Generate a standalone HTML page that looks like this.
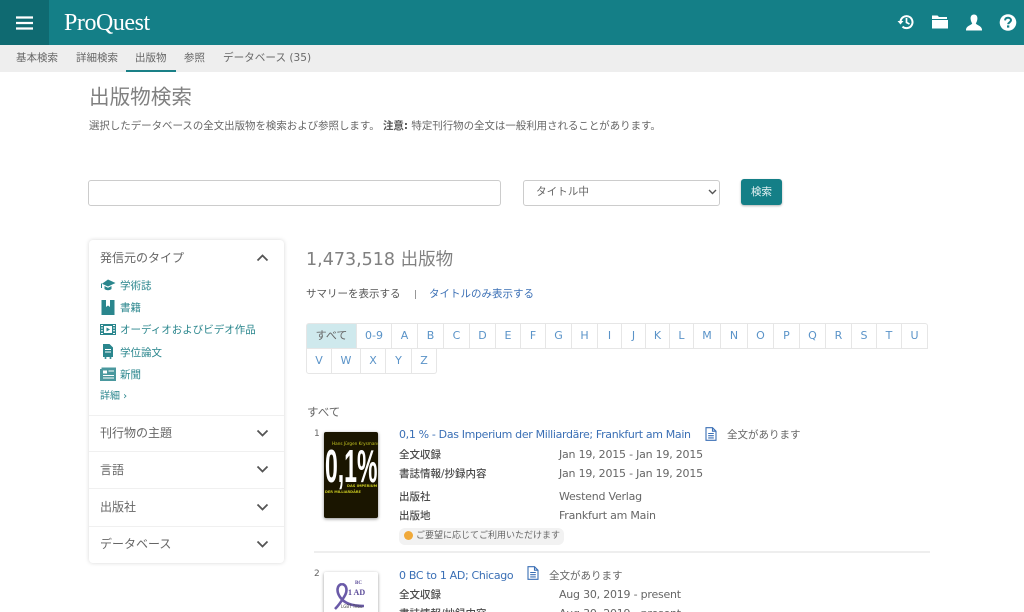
<!DOCTYPE html>
<html lang="ja"><head><meta charset="utf-8"><title>ProQuest 出版物検索</title>
<style>
html,body{margin:0;padding:0;background:#fff;width:1024px;height:612px;overflow:hidden}
#w{position:relative;width:1024px;height:612px;overflow:hidden;font-family:"DejaVu Sans","Noto Sans CJK JP",sans-serif;font-size:11px;color:#555}
.a{position:absolute;white-space:nowrap;line-height:16px}
.m{letter-spacing:-.22px;color:#666}
.t{color:#2a868d;font-size:10.5px}.l{color:#3a6fb5;letter-spacing:-.34px}.b{color:#4a4a4a;font-weight:500}
.cell{position:absolute;box-sizing:border-box;height:26px;border:1px solid #e6e6e6;border-left:0;text-align:center;line-height:24px;color:#5a93c8;font-size:11px;background:#fff}
.sec{position:absolute;left:100px;font-size:12px;color:#666;line-height:16px;white-space:nowrap}
.div{position:absolute;left:89px;width:195px;height:1px;background:#f0f0f0}
svg{position:absolute;display:block}
</style></head><body><div id="w">
<div style="position:absolute;left:0;top:0;width:1024px;height:45px;background:#147f87"></div>
<div style="position:absolute;left:0;top:0;width:49px;height:45px;background:#0f6a71"></div>
<svg style="left:16px;top:16px" width="18" height="14" viewBox="0 0 18 14"><path d="M0 1.5H17M0 7H17M0 12.5H17" stroke="#fff" stroke-width="2.2"/></svg>
<div class="a" style="left:64px;top:10px;font:24px/26px 'Liberation Serif',serif;color:#fff;letter-spacing:-.45px">ProQuest</div>
<svg style="left:897px;top:13px" width="18" height="18" viewBox="0 0 18 18"><path d="M3.5 9a6 6 0 1 1 2 4.6" fill="none" stroke="#fff" stroke-width="2"/><path d="M0.5 8H6.5L3.5 11.5Z" fill="#fff"/><path d="M9.5 5V9.5L12.5 11" fill="none" stroke="#fff" stroke-width="1.7"/></svg>
<svg style="left:931px;top:14px" width="18" height="16" viewBox="0 0 18 16"><path d="M1 1.5H6.5L8 3H16V5H1ZM1 6H17V14.5H1Z" fill="#fff"/></svg>
<svg style="left:965px;top:14px" width="18" height="17" viewBox="0 0 18 17"><path d="M9 0.5C11.6 0.5 12.6 2.6 12.4 5C12.2 7 11.4 8.5 10.8 9.4C11.2 11 16.5 11.6 17 15.5V16.5H1V15.5C1.5 11.6 6.8 11 7.2 9.4C6.6 8.5 5.8 7 5.6 5C5.4 2.6 6.4 0.5 9 0.5Z" fill="#fff"/></svg>
<svg style="left:999px;top:14px" width="18" height="17" viewBox="0 0 18 17"><circle cx="9" cy="8.5" r="8.3" fill="#fff"/><path d="M6 6.4C6.2 4.6 7.5 3.8 9 3.8C10.7 3.8 12 4.8 12 6.3C12 8.2 9.3 8.3 9.2 10.2" fill="none" stroke="#147f87" stroke-width="2"/><rect x="8" y="11.4" width="2.3" height="2.2" fill="#147f87"/></svg>

<div style="position:absolute;left:0;top:45px;width:1024px;height:27px;background:#eee"></div>
<div class="a" style="left:16px;top:50px;font-size:10.5px;color:#666">基本検索</div>
<div class="a" style="left:76px;top:50px;font-size:10.5px;color:#666">詳細検索</div>
<div class="a" style="left:135px;top:50px;font-size:10.5px;color:#666">出版物</div>
<div class="a" style="left:184px;top:50px;font-size:10.5px;color:#666">参照</div>
<div class="a" style="left:223px;top:50px;font-size:10.6px;color:#6a6a6a">データベース (35)</div>
<div style="position:absolute;left:126px;top:70px;width:50px;height:2px;background:#1a8087"></div>

<div class="a" style="left:89px;top:84px;font-size:20.6px;line-height:26px;color:#808080">出版物検索</div>
<div class="a" style="left:89px;top:118px;font-size:10.45px;color:#666">選択したデータベースの全文出版物を検索および参照します。 <b style="font-weight:700;color:#555">注意:</b> 特定刊行物の全文は一般利用されることがあります。</div>

<div style="position:absolute;left:88px;top:180px;width:411px;height:24px;border:1px solid #ccc;border-radius:3px;background:#fff"></div>
<div style="position:absolute;left:523px;top:180px;width:195px;height:24px;border:1px solid #ccc;border-radius:3px;background:#fff"></div>
<div class="a" style="left:536px;top:184px;font-size:10.6px;color:#666">タイトル中</div>
<svg style="left:708px;top:189px" width="9" height="6" viewBox="0 0 9 6"><path d="M1 1L4.5 4.5L8 1" fill="none" stroke="#555" stroke-width="1.4"/></svg>
<div style="position:absolute;left:741px;top:179px;width:41px;height:26px;background:#147f87;border-radius:3px;box-shadow:0 1px 2px rgba(0,0,0,.3);color:#e8f4f5;font-size:10.5px;line-height:27px;text-align:center">検索</div>

<div style="position:absolute;left:89px;top:240px;width:195px;height:323px;background:#fff;border-radius:4px;box-shadow:0 0 4px rgba(0,0,0,.16)"></div>
<div class="sec" style="top:250px">発信元のタイプ</div>
<svg style="left:256px;top:254px" width="13" height="8" viewBox="0 0 13 8"><path d="M1.5 6.5L6.5 1.5L11.5 6.5" fill="none" stroke="#555" stroke-width="1.8"/></svg>
<svg style="left:100px;top:279px" width="16" height="12" viewBox="0 0 16 12"><path d="M8 0.5L15.5 4L8 7.5L2 4.7Z" fill="#2a868d"/><path d="M4.5 7V10C6 11.6 10 11.6 11.5 10V7L8 8.7Z" fill="#2a868d"/><path d="M1.5 4.5V9" stroke="#2a868d" stroke-width="1"/></svg>
<div class="a t" style="left:120px;top:278px">学術誌</div>
<svg style="left:101px;top:300px" width="14" height="15" viewBox="0 0 14 15"><path d="M0.5 0H5V7L7 5.5L9 7V0H13.5V15H0.5Z" fill="#2a868d"/></svg>
<div class="a t" style="left:120px;top:300px">書籍</div>
<svg style="left:100px;top:324px" width="16" height="11" viewBox="0 0 16 11"><rect width="16" height="11" fill="#2a868d"/><rect x="4" y="2" width="8" height="7" fill="#fff"/><path d="M6.5 3.5L10 5.5L6.5 7.5Z" fill="#2a868d"/><path d="M1 1.5H3M1 4H3M1 6.7H3M1 9.5H3M13 1.5H15M13 4H15M13 6.7H15M13 9.5H15" stroke="#fff" stroke-width="1"/></svg>
<div class="a t" style="left:120px;top:322px">オーディオおよびビデオ作品</div>
<svg style="left:103px;top:344px" width="10" height="15" viewBox="0 0 10 15"><path d="M0 0H6.5L10 3.5V13H0Z" fill="#2a868d"/><path d="M2 5.5H8M2 8H8" stroke="#fff"/><circle cx="2.5" cy="14" r="1" fill="#2a868d"/><circle cx="7.5" cy="14" r="1" fill="#2a868d"/></svg>
<div class="a t" style="left:120px;top:345px">学位論文</div>
<svg style="left:100px;top:367px" width="16" height="14" viewBox="0 0 16 14"><path d="M0 2H1.5V0.5H16V14H0Z" fill="#2a868d" opacity=".85"/><rect x="3" y="3.5" width="4" height="3" fill="#fff"/><path d="M8.5 4H14M3 8.5H14M3 11H14" stroke="#fff"/></svg>
<div class="a t" style="left:120px;top:367px">新聞</div>
<div class="a t" style="left:100px;top:389px;font-size:10px">詳細 ›</div>

<div class="div" style="top:415px"></div>
<div class="sec" style="top:425px">刊行物の主題</div>
<div class="div" style="top:451px"></div>
<div class="sec" style="top:462px">言語</div>
<div class="div" style="top:488px"></div>
<div class="sec" style="top:499px">出版社</div>
<div class="div" style="top:526px"></div>
<div class="sec" style="top:536px">データベース</div>
<svg style="left:256px;top:429px" width="13" height="8" viewBox="0 0 13 8"><path d="M1.5 1.5L6.5 6.5L11.5 1.5" fill="none" stroke="#555" stroke-width="1.8"/></svg>
<svg style="left:256px;top:465px" width="13" height="8" viewBox="0 0 13 8"><path d="M1.5 1.5L6.5 6.5L11.5 1.5" fill="none" stroke="#555" stroke-width="1.8"/></svg>
<svg style="left:256px;top:503px" width="13" height="8" viewBox="0 0 13 8"><path d="M1.5 1.5L6.5 6.5L11.5 1.5" fill="none" stroke="#555" stroke-width="1.8"/></svg>
<svg style="left:256px;top:540px" width="13" height="8" viewBox="0 0 13 8"><path d="M1.5 1.5L6.5 6.5L11.5 1.5" fill="none" stroke="#555" stroke-width="1.8"/></svg>

<div class="a" style="left:306px;top:250px;font-size:17.5px;line-height:20px;color:#808080">1,473,518 出版物</div>
<div class="a" style="left:306px;top:286px;font-size:10.5px;color:#555">サマリーを表示する</div>
<div class="a" style="left:414px;top:287px;font-size:9px;color:#777">|</div>
<div class="a" style="left:429px;top:286px;font-size:10.5px;color:#3a6fb5">タイトルのみ表示する</div>

<div class="cell" style="left:306px;top:323px;width:51px;background:#cfe9ed;color:#666;border-left:1px solid #e6e6e6;border-radius:3px 0 0 0">すべて</div>
<div class="cell" style="left:357px;top:323px;width:35px">0-9</div>
<div class="cell" style="left:392px;top:323px;width:26px">A</div>
<div class="cell" style="left:418px;top:323px;width:26px">B</div>
<div class="cell" style="left:444px;top:323px;width:26px">C</div>
<div class="cell" style="left:470px;top:323px;width:26px">D</div>
<div class="cell" style="left:496px;top:323px;width:25px">E</div>
<div class="cell" style="left:521px;top:323px;width:25px">F</div>
<div class="cell" style="left:546px;top:323px;width:26px">G</div>
<div class="cell" style="left:572px;top:323px;width:26px">H</div>
<div class="cell" style="left:598px;top:323px;width:24px">I</div>
<div class="cell" style="left:622px;top:323px;width:24px">J</div>
<div class="cell" style="left:646px;top:323px;width:24px">K</div>
<div class="cell" style="left:670px;top:323px;width:24px">L</div>
<div class="cell" style="left:694px;top:323px;width:27px">M</div>
<div class="cell" style="left:721px;top:323px;width:27px">N</div>
<div class="cell" style="left:748px;top:323px;width:26px">O</div>
<div class="cell" style="left:774px;top:323px;width:26px">P</div>
<div class="cell" style="left:800px;top:323px;width:26px">Q</div>
<div class="cell" style="left:826px;top:323px;width:26px">R</div>
<div class="cell" style="left:852px;top:323px;width:25px">S</div>
<div class="cell" style="left:877px;top:323px;width:25px">T</div>
<div class="cell" style="left:902px;top:323px;width:26px;border-radius:0 3px 0 0">U</div>
<div class="cell" style="left:306px;top:348px;width:26px;border-left:1px solid #e6e6e6;border-radius:0 0 0 3px">V</div>
<div class="cell" style="left:332px;top:348px;width:29px">W</div>
<div class="cell" style="left:361px;top:348px;width:25px">X</div>
<div class="cell" style="left:386px;top:348px;width:26px">Y</div>
<div class="cell" style="left:412px;top:348px;width:25px;border-radius:0 0 3px 0">Z</div>

<div class="a" style="left:307px;top:404px;font-size:11.5px;color:#666">すべて</div>

<div class="a" style="left:314px;top:426px;font-size:9px;color:#666">1</div>
<div style="position:absolute;left:324px;top:432px;width:54px;height:86px;background:#1a1500;border-radius:2px;box-shadow:0 1px 3px rgba(0,0,0,.45);overflow:hidden">
<div class="a" style="left:8px;top:9px;font-size:4.2px;line-height:6px;color:#c8c820">Hans Jürgen Krysmanski</div>
<div class="a" style="left:1px;top:11px;font:700 46px/46px 'Liberation Sans',sans-serif;color:#fff;transform:scaleX(.5);transform-origin:0 0">0,1%</div>
<div class="a" style="left:23px;top:51px;font-size:3.6px;line-height:6px;color:#c8c820;font-weight:700">DAS IMPERIUM</div>
<div class="a" style="left:1px;top:57px;font-size:3.5px;line-height:6px;color:#c8c820;font-weight:700">DER MILLIARDÄRE</div>
</div>
<div class="a l" style="left:399px;top:427px">0,1 % - Das Imperium der Milliardäre; Frankfurt am Main</div>
<svg style="left:705px;top:427px" width="12" height="14" viewBox="0 0 12 14"><path d="M1 0.7H7.5L11 4.2V13.3H1ZM7.5 .7V4.2H11M3.2 6.5H8.8M3.2 8.7H8.8M3.2 10.9H8.8" fill="none" stroke="#3a6fb5" stroke-width="1.1"/></svg>
<div class="a" style="left:727px;top:427px;font-size:10.5px;color:#666">全文があります</div>
<div class="a b" style="left:399px;top:447px;font-size:10.5px">全文収録</div>
<div class="a m" style="left:559px;top:447px">Jan 19, 2015 - Jan 19, 2015</div>
<div class="a b" style="left:399px;top:466px;font-size:10.5px">書誌情報/抄録内容</div>
<div class="a m" style="left:559px;top:466px">Jan 19, 2015 - Jan 19, 2015</div>
<div class="a b" style="left:399px;top:489px;font-size:10.5px">出版社</div>
<div class="a m" style="left:559px;top:489px">Westend Verlag</div>
<div class="a b" style="left:399px;top:508px;font-size:10.5px">出版地</div>
<div class="a m" style="left:559px;top:508px">Frankfurt am Main</div>
<div style="position:absolute;left:399px;top:528px;width:165px;height:17px;background:#f2f2f2;border-radius:6px"></div>
<div style="position:absolute;left:404px;top:531px;width:9px;height:9px;background:#f0a93a;border-radius:50%"></div>
<div class="a" style="left:416px;top:528px;font-size:9px;color:#666">ご要望に応じてご利用いただけます</div>
<div style="position:absolute;left:314px;top:551px;width:616px;height:2px;background:#eee"></div>

<div class="a" style="left:314px;top:566px;font-size:9px;color:#666">2</div>
<div style="position:absolute;left:324px;top:572px;width:54px;height:60px;background:#fff;border-radius:2px;box-shadow:0 1px 3px rgba(0,0,0,.4);overflow:hidden">
<svg style="left:10px;top:11px" width="34" height="28" viewBox="0 0 34 28"><path d="M8 1C3 2 2 8 6 14C10 20 17 23 30 23M8 1C13 2 14 8 10 14C7 19 4 23 1 26" fill="none" stroke="#6a5aa8" stroke-width="2.6"/></svg>
<div class="a" style="left:31px;top:8px;font:700 5px/8px 'Liberation Serif',serif;color:#5a4a98">BC</div>
<div class="a" style="left:24px;top:15px;font:700 8px/11px 'Liberation Serif',serif;color:#5a4a98">1 AD</div>
<div class="a" style="left:17px;top:32px;font-size:4px;line-height:6px;color:#444">LGBT Tribu</div>
</div>
<div class="a l" style="left:399px;top:568px">0 BC to 1 AD; Chicago</div>
<svg style="left:527px;top:566px" width="12" height="14" viewBox="0 0 12 14"><path d="M1 0.7H7.5L11 4.2V13.3H1ZM7.5 .7V4.2H11M3.2 6.5H8.8M3.2 8.7H8.8M3.2 10.9H8.8" fill="none" stroke="#3a6fb5" stroke-width="1.1"/></svg>
<div class="a" style="left:549px;top:568px;font-size:10.5px;color:#666">全文があります</div>
<div class="a b" style="left:399px;top:587px;font-size:10.5px">全文収録</div>
<div class="a m" style="left:559px;top:587px">Aug 30, 2019 - present</div>
<div class="a b" style="left:399px;top:606px;font-size:10.5px">書誌情報/抄録内容</div>
<div class="a m" style="left:559px;top:606px">Aug 30, 2019 - present</div>
</div></body></html>
